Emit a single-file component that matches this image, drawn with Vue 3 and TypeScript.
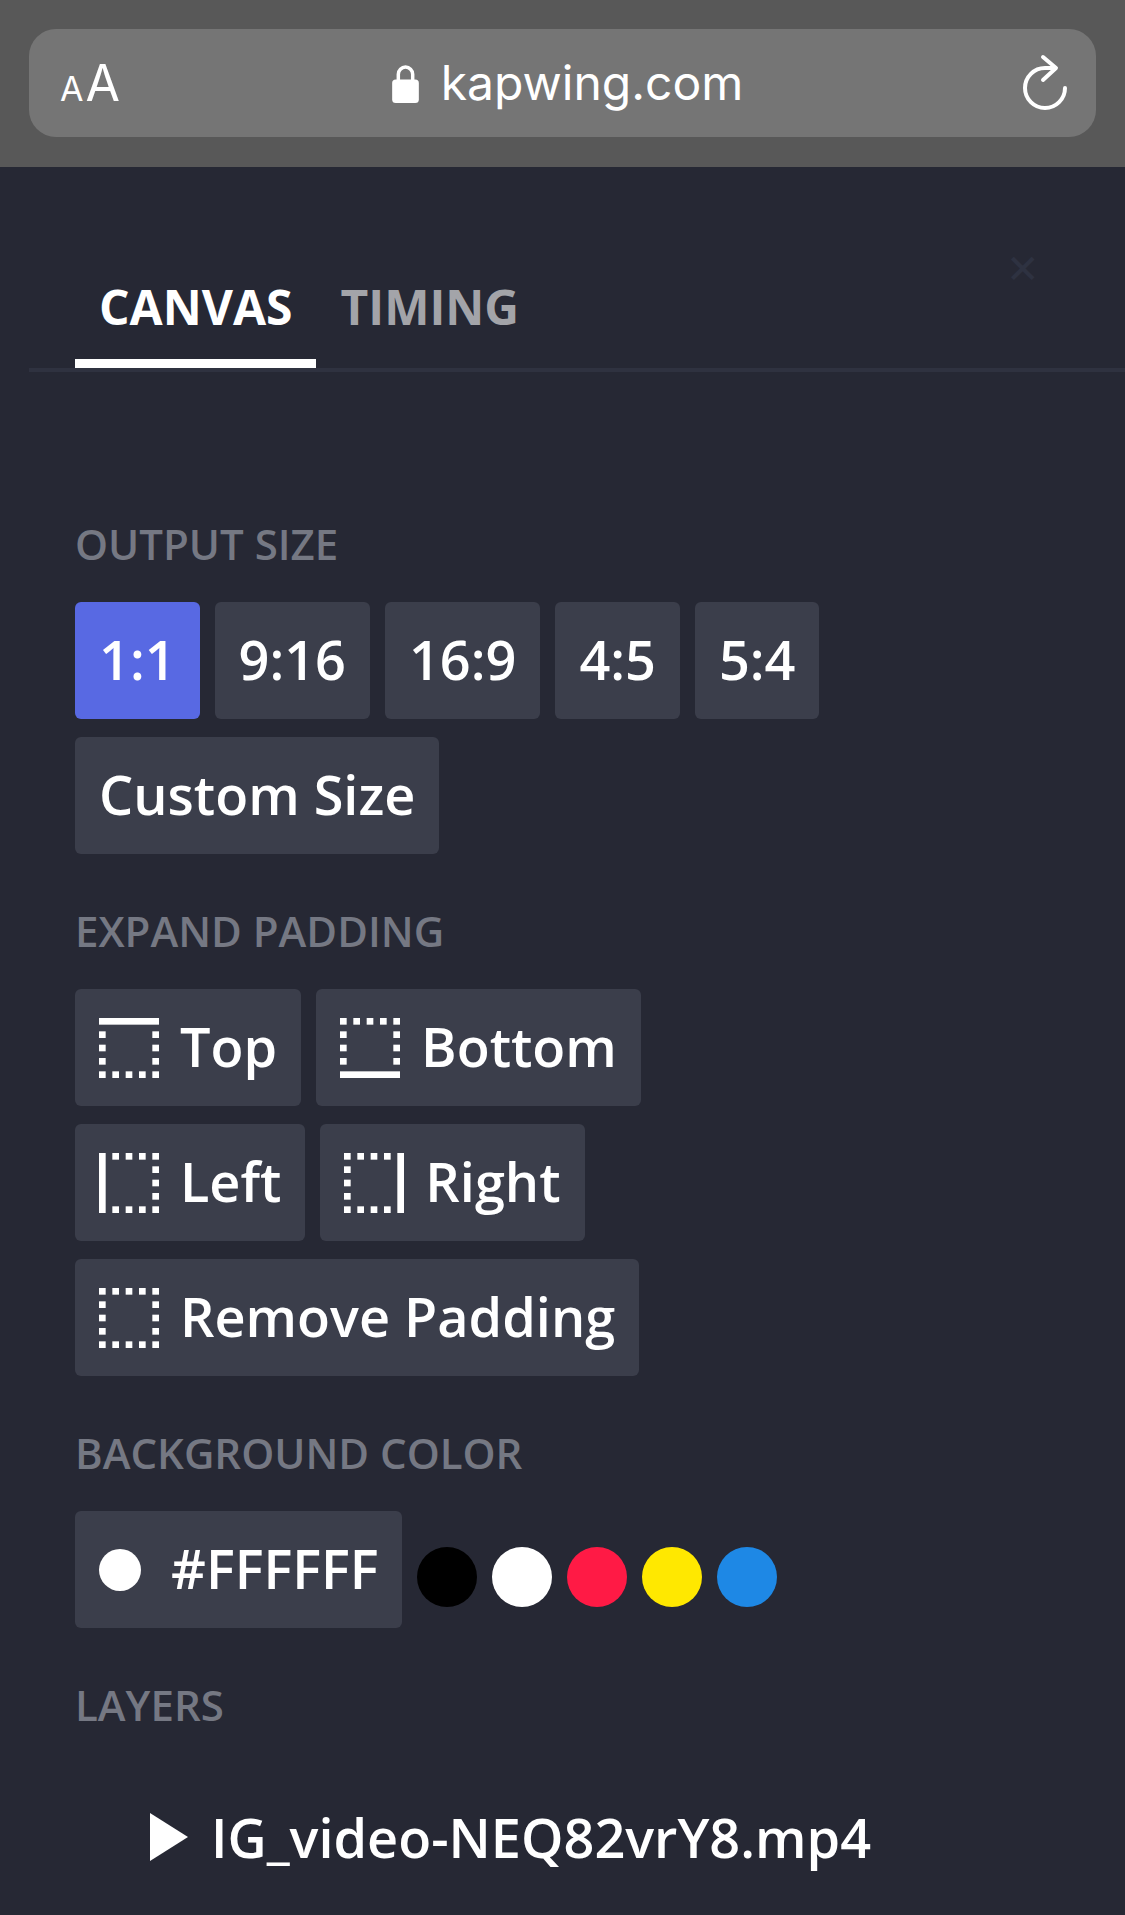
<script setup lang="ts">
type Side = 'top' | 'bottom' | 'left' | 'right' | 'none'

const sizes = ['1:1', '9:16', '16:9', '4:5', '5:4']
const paddingRows: { side: Side; label: string }[][] = [
  [
    { side: 'top', label: 'Top' },
    { side: 'bottom', label: 'Bottom' },
  ],
  [
    { side: 'left', label: 'Left' },
    { side: 'right', label: 'Right' },
  ],
  [{ side: 'none', label: 'Remove Padding' }],
]
const swatches = ['#000000', '#ffffff', '#ff1a45', '#ffe800', '#1e88e5']

// perimeter of squares on an 18 unit box, minus the side drawn as a solid bar
function dots(side: Side) {
  const out: { x: number; y: number }[] = []
  for (let x = 0; x <= 16; x += 4) {
    for (let y = 0; y <= 16; y += 4) {
      if (x > 0 && x < 16 && y > 0 && y < 16) continue
      if (side === 'top' && y === 0) continue
      if (side === 'bottom' && y === 16) continue
      if (side === 'left' && x === 0) continue
      if (side === 'right' && x === 16) continue
      out.push({ x, y })
    }
  }
  return out
}

function bar(side: Side) {
  if (side === 'top') return { x: 0, y: 0, width: 18, height: 2 }
  if (side === 'bottom') return { x: 0, y: 16, width: 18, height: 2 }
  if (side === 'left') return { x: 0, y: 0, width: 2, height: 18 }
  if (side === 'right') return { x: 16, y: 0, width: 2, height: 18 }
  return null
}
</script>

<template>
  <div class="page">
    <header class="browser-bar">
      <div class="url-field">
        <span class="text-size"><small>A</small>A</span>
        <span class="address">
          <svg class="lock" viewBox="0 0 26 38" aria-hidden="true">
            <path d="M6 17v-7a7 7 0 0 1 14 0v7" fill="none" stroke="#fff" stroke-width="3.4" />
            <rect x="0" y="15" width="26" height="23" rx="3.5" fill="#fff" />
          </svg>
          kapwing.com
        </span>
        <svg class="reload" viewBox="0 0 52 62" aria-hidden="true">
          <path
            d="M45 38A20 20 0 1 1 25 18H35M23 7L36 18L23 30"
            fill="none"
            stroke="#fff"
            stroke-width="4"
            stroke-linecap="round"
            stroke-linejoin="round"
          />
        </svg>
      </div>
    </header>

    <main class="panel">
      <span class="close">✕</span>
      <nav class="tabs">
        <button class="tab active" type="button">CANVAS</button>
        <button class="tab" type="button">TIMING</button>
      </nav>

      <div class="content">
        <h2 class="label first">OUTPUT SIZE</h2>
        <div class="row">
          <button
            v-for="(size, i) in sizes"
            :key="size"
            class="btn"
            :class="{ selected: i === 0 }"
            type="button"
          >
            {{ size }}
          </button>
        </div>
        <div class="row">
          <button class="btn" type="button">Custom Size</button>
        </div>

        <h2 class="label">EXPAND PADDING</h2>
        <div v-for="(row, r) in paddingRows" :key="r" class="row">
          <button v-for="item in row" :key="item.side" class="btn" type="button">
            <svg class="pad-icon" viewBox="0 0 18 18" aria-hidden="true">
              <rect v-if="bar(item.side)" v-bind="bar(item.side)!" fill="#fff" />
              <rect
                v-for="d in dots(item.side)"
                :key="`${d.x}-${d.y}`"
                :x="d.x"
                :y="d.y"
                width="2"
                height="2"
                fill="#fff"
              />
            </svg>
            {{ item.label }}
          </button>
        </div>

        <h2 class="label">BACKGROUND COLOR</h2>
        <div class="row color-row">
          <button class="btn color-btn" type="button">
            <span class="color-dot"></span>
            #FFFFFF
          </button>
          <span
            v-for="color in swatches"
            :key="color"
            class="swatch"
            :style="{ background: color }"
          ></span>
        </div>

        <h2 class="label">LAYERS</h2>
        <div class="layer">
          <svg class="caret" viewBox="0 0 38 48" aria-hidden="true">
            <path d="M0 0l38 24L0 48z" fill="#fff" />
          </svg>
          <span>IG_video-NEQ82vrY8.mp4</span>
        </div>
      </div>
    </main>
  </div>
</template>

<style>
html,
body {
  background: #262834;
}
</style>

<style scoped>
.page {
  width: 1125px;
  height: 1915px;
  overflow: hidden;
  background: #262834;
  font-family: 'Open Sans', 'Noto Sans', sans-serif;
  color: #fff;
}

.browser-bar {
  height: 167px;
  padding: 29px 29px 30px;
  box-sizing: border-box;
  background: #585858;
}

.url-field {
  position: relative;
  display: flex;
  align-items: center;
  justify-content: center;
  height: 108px;
  border-radius: 27px;
  background: #757575;
}

.text-size {
  position: absolute;
  left: 31px;
  top: 29px;
  font-family: 'Inter', sans-serif;
  font-size: 50px;
  line-height: 50px;
}

.text-size small {
  font-size: 34px;
  margin-right: 2px;
}

.address {
  display: flex;
  align-items: center;
  gap: 22px;
  margin-left: 10px;
  font-family: 'Inter', 'Liberation Sans', sans-serif;
  font-size: 48px;
  line-height: 60px;
}

.lock {
  width: 27px;
  height: 39px;
}

.reload {
  position: absolute;
  right: 24px;
  top: 21px;
  width: 52px;
  height: 62px;
}

.panel {
  position: relative;
}

.close {
  position: absolute;
  left: 1006px;
  top: 79px;
  font-size: 40px;
  line-height: 44px;
  color: #2e3241;
}

.tabs {
  display: flex;
  height: 205px;
  box-sizing: border-box;
  margin-left: 29px;
  padding-left: 46px;
  align-items: flex-end;
  border-bottom: 4px solid #2f3240;
}

.tab {
  height: 100px;
  padding: 0 24px 13px;
  border: 0;
  border-bottom: 9px solid transparent;
  background: transparent;
  color: #a3a4a9;
  font-family: inherit;
  font-size: 48px;
  font-weight: 700;
  line-height: 60px;
}

.tab.active {
  color: #fff;
  border-bottom-color: #fff;
}

.content {
  padding-left: 75px;
}

.label {
  margin: 51px 0 32px;
  font-size: 42px;
  font-weight: 600;
  line-height: 52px;
  color: #757883;
}

.label.first {
  margin-top: 146px;
}

.row {
  display: flex;
  gap: 15px;
  margin-bottom: 18px;
}

.row:has(+ .label),
.color-row {
  margin-bottom: 0;
}

.btn {
  display: flex;
  align-items: center;
  height: 117px;
  padding: 0 24px 4px;
  border: 0;
  border-radius: 6px;
  background: #3b3e4b;
  color: #fff;
  font-family: inherit;
  font-size: 54px;
  font-weight: 600;
  line-height: 70px;
  white-space: nowrap;
}

.btn.selected {
  background: #5869e3;
}

.pad-icon {
  width: 60px;
  height: 60px;
  margin-top: 4px;
  margin-right: 21px;
  flex: none;
}

.color-row {
  align-items: center;
}

.color-dot {
  width: 42px;
  height: 42px;
  margin-top: 4px;
  margin-right: 30px;
  border-radius: 50%;
  background: #fff;
}

.swatch {
  width: 60px;
  height: 60px;
  margin-top: 15px;
  border-radius: 50%;
}

.layer {
  display: flex;
  align-items: center;
  gap: 23px;
  margin-top: 69px;
  padding-left: 75px;
  font-size: 54px;
  font-weight: 600;
  line-height: 74px;
}

.caret {
  width: 38px;
  height: 48px;
}
</style>
